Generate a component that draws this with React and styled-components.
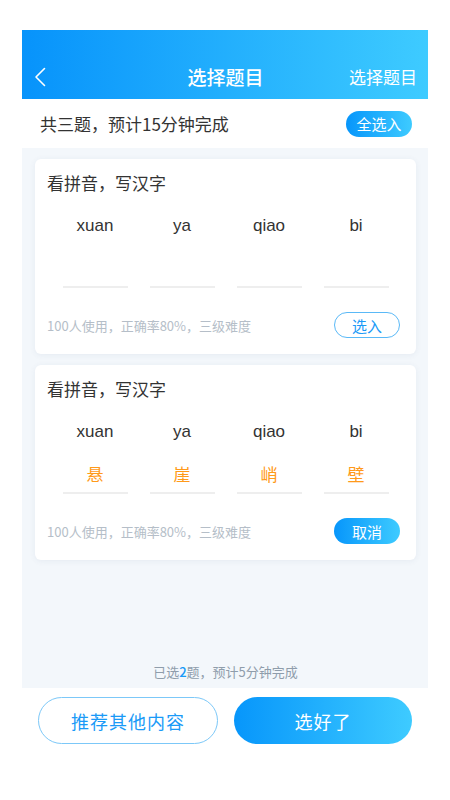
import React from 'react'
import styled, { createGlobalStyle } from 'styled-components'

const GlobalStyle = createGlobalStyle`
  body {
    margin: 0;
    background: #fff;
    font-family: "Noto Sans CJK SC", "Noto Sans", sans-serif;
  }
`

const questions = [
  { pinyin: ['xuan', 'ya', 'qiao', 'bi'], answers: ['', '', '', ''], picked: false },
  { pinyin: ['xuan', 'ya', 'qiao', 'bi'], answers: ['悬', '崖', '峭', '壁'], picked: true },
]

function App() {
  return (
    <>
      <GlobalStyle />
      <Page>
        <Header>
          <BackButton>
            <svg width="12" height="20" viewBox="0 0 12 20">
              <path d="M10.5 1.5 L2 10 L10.5 18.5" fill="none" stroke="#fff" strokeWidth="1.6" strokeLinecap="round" strokeLinejoin="round" />
            </svg>
          </BackButton>
          <Title>选择题目</Title>
          <HeaderAction>选择题目</HeaderAction>
        </Header>
        <SubBar>
          <Summary>共三题，预计15分钟完成</Summary>
          <SmallButton $filled>全选入</SmallButton>
        </SubBar>
        <ListArea>
          {questions.map((q, i) => (
            <Card key={i}>
              <CardTitle>看拼音，写汉字</CardTitle>
              <Grid>
                {q.pinyin.map((p, j) => (
                  <Cell key={j}>
                    <Pinyin>{p}</Pinyin>
                    <Answer>{q.answers[j]}</Answer>
                  </Cell>
                ))}
              </Grid>
              <CardFooter>
                <Stats>100人使用，正确率80%，三级难度</Stats>
                <SmallButton $filled={q.picked}>{q.picked ? '取消' : '选入'}</SmallButton>
              </CardFooter>
            </Card>
          ))}
          <Note>已选<b>2</b>题，预计5分钟完成</Note>
        </ListArea>
        <Actions>
          <BigButton>推荐其他内容</BigButton>
          <BigButton $filled>选好了</BigButton>
        </Actions>
      </Page>
    </>
  )
}

const Page = styled.div`
  width: 406px;
  margin: 30px auto 0;
  display: flex;
  flex-direction: column;
`

const Header = styled.div`
  height: 69px;
  box-sizing: border-box;
  padding: 30px 11px 6px 10px;
  background: linear-gradient(to right, #0793fb, #3ecbff);
  display: flex;
  align-items: center;
  position: relative;
  color: #fff;
`

const BackButton = styled.div`
  width: 30px;
  height: 33px;
  display: flex;
  align-items: center;
  padding-left: 2px;
`

const Title = styled.div`
  flex: 1;
  text-align: center;
  font-size: 19px;
  font-weight: 500;
  line-height: 33px;
  padding-left: 38px;
`

const HeaderAction = styled.div`
  font-size: 17px;
  line-height: 33px;
`

const SubBar = styled.div`
  height: 49px;
  box-sizing: border-box;
  padding: 0 16px 0 18px;
  display: flex;
  align-items: center;
  justify-content: space-between;
`

const Summary = styled.div`
  font-size: 17px;
  color: #333;
`

const SmallButton = styled.div`
  width: 66px;
  height: 26px;
  box-sizing: border-box;
  border-radius: 13px;
  display: flex;
  align-items: center;
  justify-content: center;
  font-size: 15px;
  ${p => p.$filled
    ? 'background: linear-gradient(to right, #0796fb, #3ecbff); color: #fff;'
    : 'border: 1px solid #5ab9f7; color: #1a9af7; background: #fff;'}
`

const ListArea = styled.div`
  height: 540px;
  box-sizing: border-box;
  background: #f3f7fb;
  padding: 11px 12px 6px 13px;
  display: flex;
  flex-direction: column;
  gap: 11px;
`

const Card = styled.div`
  background: #fff;
  border-radius: 6px;
  box-shadow: 0 1px 6px rgba(40, 70, 110, 0.07);
  padding: 12px 16px 16px 12px;
`

const CardTitle = styled.div`
  font-size: 17px;
  line-height: 24px;
  color: #333;
`

const Grid = styled.div`
  display: grid;
  grid-template-columns: repeat(4, 65px);
  column-gap: 22px;
  justify-content: center;
  margin: 19px 0 0 4px;
`

const Cell = styled.div`
  display: flex;
  flex-direction: column;
  align-items: center;
  border-bottom: 2px solid #eeeeee;
`

const Pinyin = styled.div`
  font-family: "Liberation Sans", Arial, sans-serif;
  font-size: 17px;
  line-height: 24px;
  color: #333;
`

const Answer = styled.div`
  margin-top: 18px;
  height: 24px;
  line-height: 24px;
  padding-bottom: 6px;
  font-size: 17px;
  color: #ff9a1a;
`

const CardFooter = styled.div`
  margin-top: 24px;
  display: flex;
  align-items: center;
  justify-content: space-between;
`

const Stats = styled.div`
  font-size: 13px;
  color: #b5bec8;
`

const Note = styled.div`
  margin-top: auto;
  text-align: center;
  font-size: 13px;
  line-height: 20px;
  color: #8f9dab;

  b {
    font-weight: 500;
    color: #1a9af7;
  }
`

const Actions = styled.div`
  display: flex;
  gap: 16px;
  padding: 9px 16px;
`

const BigButton = styled.div`
  flex: 1;
  height: 47px;
  box-sizing: border-box;
  border-radius: 24px;
  display: flex;
  align-items: center;
  justify-content: center;
  font-size: 18px;
  letter-spacing: 1px;
  ${p => p.$filled
    ? 'background: linear-gradient(to right, #0796fb, #3ecbff); color: #fff;'
    : 'border: 1px solid #7cc8f8; color: #1a9af7; background: #fff;'}
`

export default App
